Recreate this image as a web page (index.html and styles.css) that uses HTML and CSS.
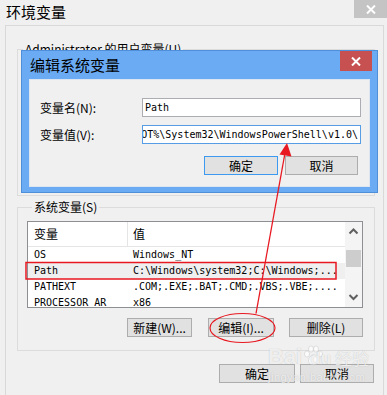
FILE: index.html
```html
<!DOCTYPE html>
<html>
<head>
<meta charset="utf-8">
<link rel="stylesheet" href="styles.css">
</head>
<body>
<div class="window">
  <div class="titlebar">
    <span class="title">环境变量</span>
    <span class="close close-gray"><svg width="10" height="9" viewBox="0 0 10 9"><path d="M1 0.5 L9 8.5 M9 0.5 L1 8.5" stroke="#fff" stroke-width="2"/></svg></span>
  </div>
  <div class="panel">
    <fieldset class="group">
      <legend>Administrator 的用户变量(U)</legend>
      <div class="user-body"></div>
    </fieldset>
    <fieldset class="group sys">
      <legend>系统变量(S)</legend>
      <div class="list">
        <div class="list-main">
          <div class="row head"><span class="c1">变量</span><span class="c2">值</span></div>
          <div class="row"><span class="c1">OS</span><span class="c2">Windows_NT</span></div>
          <div class="row sel"><span class="c1">Path</span><span class="c2">C:\Windows\system32;C:\Windows;...</span></div>
          <div class="row"><span class="c1">PATHEXT</span><span class="c2">.COM;.EXE;.BAT;.CMD;.VBS;.VBE;....</span></div>
          <div class="row"><span class="c1">PROCESSOR_AR</span><span class="c2">x86</span></div>
        </div>
        <div class="scrollbar">
          <span class="arrow"><svg width="17" height="17" viewBox="0 0 17 17"><polyline points="4.5,11.5 8.5,7.5 12.5,11.5" fill="none" stroke="#606060" stroke-width="2"/></svg></span>
          <span class="thumb"></span>
          <span class="arrow down"><svg width="17" height="17" viewBox="0 0 17 17"><polyline points="4.5,5 8.5,9 12.5,5" fill="none" stroke="#606060" stroke-width="2"/></svg></span>
        </div>
      </div>
      <div class="btnrow">
        <button class="btn w65">新建(W)...</button>
        <button class="btn w66">编辑(I)...</button>
        <button class="btn w74">删除(L)</button>
      </div>
    </fieldset>
    <div class="footer">
      <button class="btn w76">确定</button>
      <button class="btn w74">取消</button>
    </div>
  </div>
</div>

<div class="dialog">
  <div class="dlg-title">
    <span class="dlg-text">编辑系统变量</span>
    <span class="close close-red"><svg width="10" height="9" viewBox="0 0 10 9"><path d="M1 0.5 L9 8.5 M9 0.5 L1 8.5" stroke="#fff" stroke-width="2"/></svg></span>
  </div>
  <div class="client">
    <div class="form">
      <span class="lbl">变量名(N):</span>
      <div class="input">Path</div>
      <span class="lbl">变量值(V):</span>
      <div class="input focus right"><span>%SYSTEMROOT%\System32\WindowsPowerShell\v1.0\</span></div>
    </div>
    <div class="dlg-btns">
      <button class="btn default w74">确定</button>
      <button class="btn w73">取消</button>
    </div>
  </div>
</div>

<div class="watermark">
  <div class="wm-top"><span class="wm-bai">Bai</span><svg class="paw" width="22" height="22" viewBox="0 0 22 22"><g fill="rgba(255,255,255,0.7)" stroke="rgba(160,160,160,0.35)" stroke-width="0.8"><ellipse cx="5" cy="9" rx="2.5" ry="3"/><ellipse cx="9" cy="4" rx="2.5" ry="3"/><ellipse cx="14" cy="4" rx="2.5" ry="3"/><ellipse cx="18" cy="9" rx="2.5" ry="3"/><path d="M11.5 10 C7 10 5 17 8 19 C10 20 13 20 15 19 C18 17 16 10 11.5 10 Z"/></g></svg><span class="wm-du">du</span><span class="wm-jy">经验</span></div>
  <div class="wm-url">jingyan.baidu.com</div>
</div>

<svg class="annot" width="387" height="395" viewBox="0 0 387 395">
  <rect x="26" y="262.5" width="310" height="16.5" fill="none" stroke="#e81820" stroke-width="1.5"/>
  <ellipse cx="242.5" cy="328" rx="32.5" ry="14.5" fill="none" stroke="#e81820" stroke-width="1.2"/>
  <line x1="256" y1="313.5" x2="285" y2="153" stroke="#e81820" stroke-width="1.3"/>
  <polygon points="287,143 291.5,156.5 279.5,154.5" fill="#e81820"/>
</svg>
</body>
</html>
```

FILE: styles.css
```css
body {
  margin: 0;
  width: 387px;
  height: 395px;
  overflow: hidden;
  position: relative;
  background: #f0f0f0;
  font-family: "Noto Sans CJK SC", sans-serif;
  font-size: 12px;
  color: #000;
}

.titlebar {
  display: flex;
  height: 25px;
}
.title {
  padding-left: 6px;
  font-size: 15px;
  line-height: 24px;
}
.close {
  display: flex;
  align-items: center;
  justify-content: center;
}
.close-gray {
  margin-left: auto;
  width: 33px;
  height: 18px;
  background: #c4c4c4;
}

.panel {
  margin-left: 5px;
  width: 379px;
  height: 370px;
  box-sizing: border-box;
  border: 1px solid #d9d9d9;
  border-bottom: 0;
  padding: 16px 8px 0 11px;
}

fieldset.group {
  margin: 0;
  padding: 0;
  min-width: 0;
  border: 1px solid #dcdcdc;
}
legend {
  margin-left: 5px;
  padding: 0 2px;
  font-size: 12px;
  line-height: 14px;
}
.user-body {
  height: 139px;
}
fieldset.sys {
  margin-top: 4px;
  padding: 7px 11px 13px 9px;
}

.list {
  display: flex;
  height: 87px;
  box-sizing: border-box;
  border: 1px solid #8d8f93;
  background: #fff;
  overflow: hidden;
}
.list-main {
  flex: 1;
  overflow: hidden;
}
.row {
  display: flex;
  height: 16px;
  font-family: "DejaVu Sans Mono", monospace;
  font-size: 10px;
  line-height: 16px;
  white-space: nowrap;
}
.row.head {
  height: 25px;
  box-sizing: border-box;
  border-bottom: 1px solid #e5e5e5;
  font-family: "Noto Sans CJK SC", sans-serif;
  font-size: 12px;
  line-height: 24px;
}
.row.sel {
  background: #efefef;
}
.c1 {
  width: 100px;
  box-sizing: border-box;
  padding-left: 6px;
  flex: none;
}
.head .c1 {
  border-right: 1px solid #e5e5e5;
}
.c2 {
  padding-left: 5px;
}

.scrollbar {
  width: 17px;
  flex: none;
  display: flex;
  flex-direction: column;
  background: #f4f4f4;
}
.arrow {
  height: 17px;
  display: block;
}
.arrow svg {
  display: block;
}
.arrow.down {
  margin-top: auto;
}
.thumb {
  display: block;
  height: 17px;
  margin: 11px 1px 0 1px;
  background: #cdcdcd;
}

.btn {
  height: 19px;
  box-sizing: border-box;
  border: 1px solid #adadad;
  background: #e1e1e1;
  padding: 0;
  margin: 0;
  font-family: "Noto Sans CJK SC", sans-serif;
  font-size: 12px;
  line-height: 17px;
  color: #000;
}
.btn.default {
  border-color: #3c9af0;
}
.w65 { width: 65px; }
.w66 { width: 66px; }
.w73 { width: 73px; }
.w74 { width: 74px; }
.w76 { width: 76px; }

.btnrow {
  display: flex;
  justify-content: flex-end;
  margin-top: 10px;
}
.btnrow .w66 { margin-left: 16px; }
.btnrow .w74 { margin-left: 15px; }

.footer {
  display: flex;
  justify-content: flex-end;
  gap: 5px;
  margin-top: 13px;
  padding-right: 1px;
}

.dialog {
  position: absolute;
  left: 21px;
  top: 50px;
  width: 357px;
  height: 143px;
  box-sizing: border-box;
  background: #6aabf4;
  border: 1px solid #4f8fd9;
  display: flex;
  flex-direction: column;
}
.dlg-title {
  display: flex;
  height: 28px;
}
.dlg-text {
  padding-left: 8px;
  font-size: 15px;
  line-height: 28px;
}
.close-red {
  margin-left: auto;
  margin-right: 5px;
  width: 32px;
  height: 20px;
  background: #c75050;
}
.client {
  margin: 0 7px;
  height: 108px;
  box-sizing: border-box;
  border: 1px solid #dde6f0;
  background: #f0f0f0;
  padding: 18px 0 0 10px;
}
.form {
  display: grid;
  grid-template-columns: 102px 219px;
  grid-auto-rows: 19px;
  row-gap: 8px;
}
.lbl {
  line-height: 19px;
}
.input {
  box-sizing: border-box;
  height: 19px;
  border: 1px solid #abadb3;
  background: #fff;
  padding: 0 2px;
  font-family: "DejaVu Sans Mono", monospace;
  font-size: 10px;
  line-height: 17px;
  white-space: nowrap;
  overflow: hidden;
}
.input.focus {
  border-color: #569de5;
}
.input.right {
  display: flex;
  justify-content: flex-end;
}
.input.right span {
  flex: none;
}
.dlg-btns {
  display: flex;
  justify-content: flex-end;
  gap: 7px;
  width: 321px;
  box-sizing: border-box;
  padding-right: 3px;
  margin-top: 12px;
}

.watermark {
  position: absolute;
  left: 268px;
  top: 343px;
  color: rgba(255, 255, 255, 0.75);
  text-shadow: 0 0 1px rgba(120, 120, 120, 0.45);
}
.wm-top {
  display: flex;
  align-items: flex-end;
  height: 26px;
}
.wm-bai, .wm-du {
  font-family: "Liberation Sans", sans-serif;
  font-weight: bold;
  font-size: 22px;
  line-height: 24px;
}
.wm-du {
  font-size: 17px;
  line-height: 20px;
  margin-left: -14px;
}
.paw {
  margin-bottom: 2px;
}
.wm-jy {
  font-size: 17px;
  line-height: 22px;
  margin-left: 4px;
}
.wm-url {
  font-family: "Liberation Sans", sans-serif;
  font-size: 11px;
  line-height: 12px;
  letter-spacing: 0.5px;
  margin-top: 2px;
}

.annot {
  position: absolute;
  left: 0;
  top: 0;
  pointer-events: none;
}
```
